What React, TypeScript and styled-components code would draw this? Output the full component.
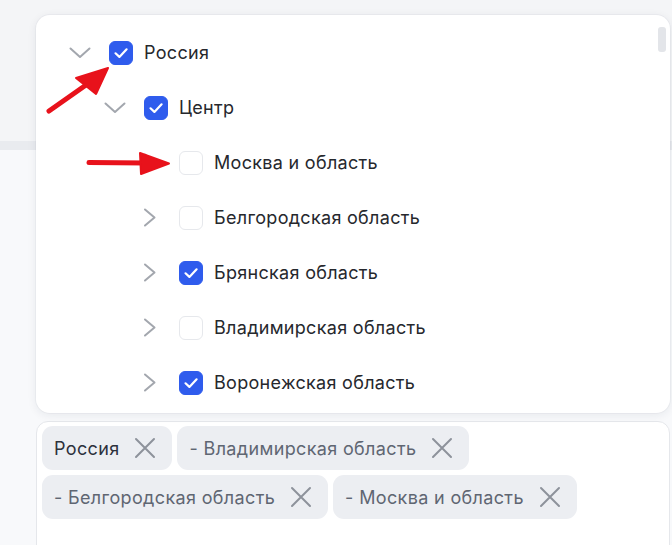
import styled, { createGlobalStyle } from 'styled-components'

const GlobalStyle = createGlobalStyle`
  html, body {
    margin: 0;
    padding: 0;
  }
  body {
    width: 672px;
    height: 545px;
    overflow: hidden;
    font-family: Inter, "Noto Sans", Arial, sans-serif;
    background: linear-gradient(
      to bottom,
      #f4f5f7 0,
      #f4f5f7 141px,
      #e9ebef 141px,
      #e9ebef 150px,
      #f8f9fb 150px
    );
  }
`

type Node = {
  label: string
  level: number
  open?: boolean
  checked?: boolean
}

const tree: Node[] = [
  { label: 'Россия', level: 0, open: true, checked: true },
  { label: 'Центр', level: 1, open: true, checked: true },
  { label: 'Москва и область', level: 2 },
  { label: 'Белгородская область', level: 2 },
  { label: 'Брянская область', level: 2, checked: true },
  { label: 'Владимирская область', level: 2 },
  { label: 'Воронежская область', level: 2, checked: true },
]

const chips = [
  { label: 'Россия', dark: true },
  { label: '- Владимирская область' },
  { label: '- Белгородская область' },
  { label: '- Москва и область' },
]

const ChevronDown = () => (
  <svg width="22" height="12" viewBox="0 0 22 12" fill="none">
    <path d="M1.5 1.5L11 10L20.5 1.5" stroke="#a3a7ae" strokeWidth="2" strokeLinecap="round" strokeLinejoin="round" />
  </svg>
)

const ChevronRight = () => (
  <svg width="14" height="19" viewBox="0 0 14 19" fill="none">
    <path d="M2 1.5L11.5 9.5L2 17.5" stroke="#a3a7ae" strokeWidth="2" strokeLinecap="round" strokeLinejoin="round" />
  </svg>
)

const CheckMark = () => (
  <svg width="24" height="24" viewBox="0 0 24 24" fill="none">
    <path d="M6.5 12.3L10.4 15.9L17.6 8.3" stroke="#fff" strokeWidth="2.2" strokeLinecap="round" strokeLinejoin="round" />
  </svg>
)

const Cross = () => (
  <svg width="22" height="22" viewBox="0 0 22 22" fill="none">
    <path d="M2 2L20 20M20 2L2 20" stroke="#8d929b" strokeWidth="2" strokeLinecap="round" />
  </svg>
)

const App = () => {
  return (
    <>
      <GlobalStyle />
      <Frame>
        <Popup>
          {tree.map((node) => (
            <Row key={node.label} $level={node.level}>
              <Toggle>{node.open ? <ChevronDown /> : <ChevronRight />}</Toggle>
              <Box $checked={!!node.checked}>{node.checked && <CheckMark />}</Box>
              <Label>{node.label}</Label>
            </Row>
          ))}
          <Thumb />
        </Popup>
        <Field>
          {chips.map((chip) => (
            <Chip key={chip.label} $dark={!!chip.dark}>
              {chip.label}
              <Cross />
            </Chip>
          ))}
        </Field>
        <Arrows width="672" height="545" viewBox="0 0 672 545">
          <path d="M49 111L86 85" stroke="#e8121b" strokeWidth="5" strokeLinecap="round" />
          <path d="M108 68L76 78L96 94Z" fill="#e8121b" stroke="#e8121b" strokeWidth="2" strokeLinejoin="round" />
          <path d="M89 162.5L146 163" stroke="#e8121b" strokeWidth="5" strokeLinecap="round" />
          <path d="M169 163.5L140 153L141 174Z" fill="#e8121b" stroke="#e8121b" strokeWidth="2" strokeLinejoin="round" />
        </Arrows>
      </Frame>
    </>
  )
}

export default App

const Frame = styled.div`
  position: relative;
  display: flex;
  flex-direction: column;
  gap: 8px;
  padding: 15px 2px 0 36px;
  height: 545px;
  box-sizing: border-box;
`

const Popup = styled.div`
  position: relative;
  height: 398px;
  flex-shrink: 0;
  overflow: hidden;
  padding-top: 10px;
  box-sizing: border-box;
  background: #fff;
  border-radius: 14px;
  box-shadow: 0 2px 10px rgba(30, 40, 60, 0.08), 0 0 0 1px rgba(30, 40, 60, 0.03);
`

const Row = styled.div<{ $level: number }>`
  display: flex;
  align-items: center;
  height: 55px;
  padding-left: ${(p) => 24 + p.$level * 35}px;
`

const Toggle = styled.span`
  display: flex;
  align-items: center;
  justify-content: center;
  width: 40px;
  height: 24px;
`

const Box = styled.span<{ $checked: boolean }>`
  display: flex;
  align-items: center;
  justify-content: center;
  width: 24px;
  height: 24px;
  margin-left: 9px;
  box-sizing: border-box;
  border-radius: 6px;
  background: ${(p) => (p.$checked ? '#2f5ced' : '#fff')};
  border: 1px solid ${(p) => (p.$checked ? '#2f5ced' : '#e6e8ec')};

  svg {
    flex-shrink: 0;
  }
`

const Label = styled.span`
  margin-left: 11px;
  font-size: 18px;
  letter-spacing: 0.3px;
  color: #26282d;
`

const Thumb = styled.span`
  position: absolute;
  top: 12px;
  right: 4px;
  width: 8px;
  height: 25px;
  border-radius: 3px;
  background: #e3e5e9;
`

const Field = styled.div`
  display: flex;
  flex-wrap: wrap;
  align-content: flex-start;
  gap: 5px 5px;
  height: 150px;
  flex-shrink: 0;
  padding: 4px 5px;
  box-sizing: border-box;
  background: #fff;
  border: 1px solid #e5e7eb;
  border-radius: 12px;
`

const Chip = styled.span<{ $dark: boolean }>`
  display: inline-flex;
  align-items: center;
  gap: 15px;
  height: 44px;
  padding: 0 16px 0 12px;
  border-radius: 11px;
  background: #eceef2;
  font-size: 18px;
  letter-spacing: 0.35px;
  color: ${(p) => (p.$dark ? '#2c313c' : '#5f6672')};
`

const Arrows = styled.svg`
  position: absolute;
  top: 0;
  left: 0;
  pointer-events: none;
`
